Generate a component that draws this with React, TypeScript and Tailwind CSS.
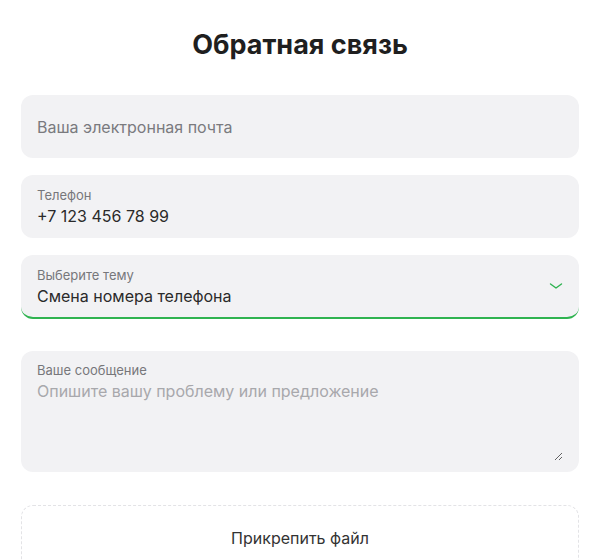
import { useState } from 'react'

function Chevron() {
  return (
    <svg className="w-4 h-4 text-[#2fb350]" viewBox="0 0 16 16" fill="none" stroke="currentColor">
      <path d="M2.5 6L8 10l5.5-4" strokeWidth={1.4} strokeLinecap="round" strokeLinejoin="round" />
    </svg>
  )
}

export default function App() {
  const [phone, setPhone] = useState('+7 123 456 78 99')
  const [message, setMessage] = useState('')

  return (
    <div
      className="min-h-[560px] bg-white px-[21px] pt-[28px] text-[#222]"
      style={{ fontFamily: 'Inter, "Noto Sans", sans-serif' }}
    >
      <h1 className="text-center text-[27px] font-bold leading-[34px] text-[#1f1f1f]">Обратная связь</h1>

      <div className="mt-[33px] flex flex-col">
        {/* Email */}
        <div className="h-[63px] rounded-xl bg-[#f2f2f4] px-4 flex items-center">
          <input
            className="w-full bg-transparent outline-none text-base text-[#222] placeholder:text-[#7a7a7e]"
            placeholder="Ваша электронная почта"
          />
        </div>

        {/* Phone */}
        <div className="mt-[17px] h-[63px] rounded-xl bg-[#f2f2f4] px-4 flex flex-col justify-center">
          <span className="text-[13px] leading-4 text-[#77777b]">Телефон</span>
          <input
            className="mt-[3px] w-full bg-transparent outline-none text-base leading-5 text-[#2a2a2a]"
            value={phone}
            onChange={e => setPhone(e.target.value)}
          />
        </div>

        {/* Topic */}
        <div className="mt-[17px] h-[64px] rounded-xl bg-[#f2f2f4] border-b-2 border-[#2fb350] pl-4 pr-[15px] flex items-center">
          <div className="flex-1 flex flex-col">
            <span className="text-[13px] leading-4 text-[#77777b]">Выберите тему</span>
            <span className="mt-[3px] text-base leading-5 text-[#2a2a2a]">Смена номера телефона</span>
          </div>
          <Chevron />
        </div>

        {/* Message */}
        <div className="mt-[32px] h-[121px] rounded-xl bg-[#f2f2f4] pl-4 pr-4 pt-[11px] pb-[11px] flex flex-col">
          <span className="text-[13px] leading-4 text-[#77777b]">Ваше сообщение</span>
          <textarea
            className="mt-[3px] flex-1 w-full bg-transparent outline-none text-base leading-5 text-[#222] placeholder:text-[#a8a8ac]"
            placeholder="Опишите вашу проблему или предложение"
            value={message}
            onChange={e => setMessage(e.target.value)}
          />
        </div>

        {/* Attach */}
        <button className="mt-[33px] h-[66px] rounded-xl border border-dashed border-[#e3e3e6] bg-white text-base text-[#333]">
          Прикрепить файл
        </button>
      </div>
    </div>
  )
}
